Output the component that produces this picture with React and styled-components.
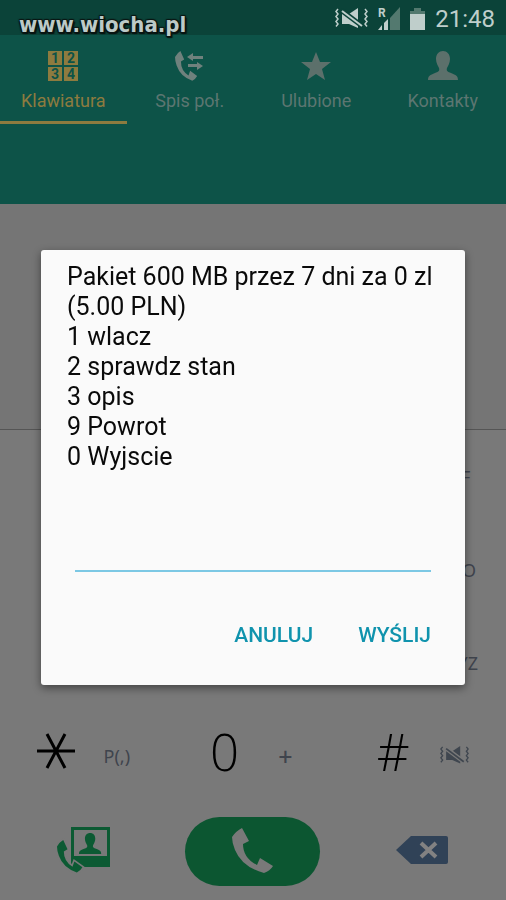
import React, { useState } from "react";
import styled, { createGlobalStyle } from "styled-components";

const GlobalStyle = createGlobalStyle`
  * {
    box-sizing: border-box;
  }
  body {
    margin: 0;
    background-color: #797979;
    font-family: Roboto, "Liberation Sans", sans-serif;
  }
  button {
    padding: 0;
    border: 0;
    background: none;
    font-family: inherit;
    cursor: pointer;
  }
  p {
    margin: 0;
  }
`;

const Screen = styled.div`
  min-height: 100vh;
  display: flex;
  flex-direction: column;
  background-color: #797979;
`;

const StatusBar = styled.div`
  height: 35px;
  padding: 2px 11px 0 0;
  display: flex;
  align-items: center;
  justify-content: flex-end;
  gap: 10px;
  background-color: #0b4339;
`;

const Clock = styled.span`
  font-size: 24px;
  line-height: 32px;
  color: #bfcecb;
`;

const Watermark = styled.span`
  position: absolute;
  top: 10px;
  left: 19px;
  font-family: "DejaVu Sans Condensed", "DejaVu Sans", sans-serif;
  font-size: 22px;
  line-height: 30px;
  font-weight: 700;
  color: #bccac7;
  text-shadow: -1px -1px 1px #0a1513, 1px -1px 1px #0a1513, -1px 1px 1px #0a1513,
    1px 1px 1px #0a1513, 2px 2px 1px #0a1513, 0 2px 1px #0a1513;
`;

const Header = styled.header`
  height: 169px;
  background-color: #0d5348;
`;

const Tabs = styled.nav`
  display: grid;
  grid-template-columns: repeat(4, 1fr);
`;

const Tab = styled.button`
  height: 89px;
  padding-top: 16px;
  display: flex;
  flex-direction: column;
  align-items: center;
  gap: 8px;
  font-size: 18px;
  line-height: 24px;
  color: ${({ $active }) => ($active ? "#8d7b3f" : "#5c7671")};
  border-bottom: 3px solid ${({ $active }) => ($active ? "#8d7b3f" : "transparent")};
`;

const Display = styled.div`
  flex: 1 0 226px;
  background-color: #757575;
  border-bottom: 1px solid #555;
`;

const Keypad = styled.div`
  display: grid;
  grid-template-columns: repeat(3, 1fr);
`;

const Key = styled.button`
  height: 93px;
  padding-left: 9px;
  display: flex;
  align-items: center;
  justify-content: center;
`;

const Digit = styled.span`
  width: 56px;
  padding-bottom: 9px;
  display: flex;
  justify-content: center;
  font-family: "Open Sans", "Noto Sans", sans-serif;
  font-size: 51px;
  line-height: 60px;
  font-weight: 360;
  color: #000;
`;

const Letters = styled.span`
  width: 66px;
  display: flex;
  justify-content: center;
  font-family: "Noto Sans", sans-serif;
  font-size: ${({ $large }) => ($large ? 25 : 18)}px;
  font-weight: ${({ $large }) => ($large ? 500 : 400)};
  line-height: 24px;
  color: #3f444d;
`;

const Actions = styled.div`
  height: 98px;
  display: grid;
  grid-template-columns: repeat(3, 1fr);
  align-items: center;
  justify-items: center;
`;

const CallButton = styled.button`
  width: 135px;
  height: 69px;
  display: flex;
  align-items: center;
  justify-content: center;
  border-radius: 35px;
  background-color: #0c5631;
`;

const Overlay = styled.div`
  position: fixed;
  inset: 35px 0 0;
  padding: 0 41px;
  display: flex;
  align-items: center;
`;

const Dialog = styled.form`
  width: 100%;
  padding: 12px 26px 25px;
  border-radius: 3px;
  background-color: #fafafa;
  box-shadow: 0 3px 8px rgba(0, 0, 0, 0.45);
`;

const Message = styled.p`
  font-size: 25px;
  line-height: 30px;
  color: #0a0a0a;
  white-space: pre-line;
`;

const AnswerLabel = styled.label`
  display: block;
  padding: 60px 8px 0;
`;

const Answer = styled.input`
  display: block;
  width: 100%;
  height: 40px;
  padding: 0;
  border: 0;
  border-bottom: 2px solid #7cc8e4;
  outline: none;
  background: none;
  font-family: inherit;
  font-size: 25px;
`;

const DialogButtons = styled.div`
  margin-top: 38px;
  padding-right: 8px;
  display: flex;
  justify-content: flex-end;
  gap: 45px;
`;

const DialogButton = styled.button`
  height: 50px;
  font-size: 21px;
  line-height: 30px;
  font-weight: 500;
  color: #1093ad;
`;

const HANDSET =
  "M0 9Q4 3 10 0L17 13L11 16Q11 30 25 37L28 30L41 38Q38 43 32 45Q10 39 3 22Q0 15 0 9Z";
const PERSON =
  "M15 0C19 0 22 3 22 8C22 12 20 15 19 17C18 20 20 21 23 22C28 24 30 25 30 29H0C0 25 2 24 7 22C10 21 12 20 11 17C10 15 8 12 8 8C8 3 11 0 15 0Z";

const MuteIcon = ({ width, color, background }) => (
  <svg width={width} viewBox="0 0 33 21" fill="none">
    <path d="M3 1L1 3.500L3 6L1 8.500L3 11L1 13.500L3 16L1 18.500" stroke={color} strokeWidth="1.500" />
    <path d="M30 1L32 3.500L30 6L32 8.500L30 11L32 13.500L30 16L32 18.500" stroke={color} strokeWidth="1.500" />
    <path d="M14 6L23 0V13Z" fill={color} />
    <path d="M6 2L27 18" stroke={background} strokeWidth="5" />
    <path d="M7 3L27 18" stroke={color} strokeWidth="2" />
    <path d="M7 6V16H14L23 20V18L7 6Z" fill={color} />
  </svg>
);

const SignalIcon = () => (
  <svg width="22" height="23" viewBox="0 0 22 23" overflow="visible">
    <path d="M12 11L22 0V23H12Z" fill="#53796f" />
    <path d="M0 23L4 18V23ZM6 16L10 12V23H6Z" fill="#bfcecb" />
    <text x="0" y="10" fontSize="12" fontWeight="700" fill="#bfcecb">R</text>
  </svg>
);

const BatteryIcon = () => (
  <svg width="15" height="22" viewBox="0 0 15 22">
    <path d="M4 0H11V3H15V6H0V3H4Z" fill="#53796f" />
    <path d="M0 6H15V22H0Z" fill="#bfcecb" />
  </svg>
);

const KeypadIcon = () => (
  <svg width="30" height="30" viewBox="0 0 30 30">
    <path d="M0 0H14V14H0ZM16 0H30V14H16ZM0 16H14V30H0ZM16 16H30V30H16Z" fill="#8d7b3f" />
    <g fontSize="14" fontWeight="700" fill="#0d5348" textAnchor="middle">
      <text x="7" y="12">1</text>
      <text x="23" y="12">2</text>
      <text x="7" y="28">3</text>
      <text x="23" y="28">4</text>
    </g>
  </svg>
);

const LogIcon = () => (
  <svg width="29" height="30" viewBox="0 0 29 30" fill="#6f817d">
    <path d={HANDSET} transform="scale(0.54 0.66)" />
    <path d="M12 6L18 2V5H28V8H18V10ZM28 15L22 11V13H13V16H22V19Z" />
  </svg>
);

const StarIcon = () => (
  <svg width="30" height="30" viewBox="0 0 30 30" fill="#5c706b">
    <path d="M15 1L19 11H30L21 18L24 29L15 23L6 29L9 18L0 11H11Z" />
  </svg>
);

const PersonIcon = () => (
  <svg width="30" height="30" viewBox="0 0 30 30" fill="#5c706b">
    <path d={PERSON} />
  </svg>
);

const StarKeyIcon = () => (
  <svg width="38" height="36" viewBox="0 0 38 36" stroke="#000" strokeWidth="3">
    <path d="M0 18H38M10 1L28 35M28 1L10 35" />
  </svg>
);

const VideoCallIcon = () => (
  <svg width="54" height="46" viewBox="0 0 54 46" fill="#0c5a33">
    <path d="M14 0H53V40H14ZM17 3V29H50V3Z" fillRule="evenodd" />
    <path d={PERSON} transform="translate(22 6) scale(0.74 0.72)" />
    <path d={HANDSET} transform="translate(0 13) scale(0.62 0.72)" stroke="#797979" strokeWidth="5" />
    <path d={HANDSET} transform="translate(0 13) scale(0.62 0.72)" />
  </svg>
);

const CallIcon = () => (
  <svg width="42" height="46" viewBox="0 0 42 46" fill="#797979">
    <path d={HANDSET} />
  </svg>
);

const BackspaceIcon = () => (
  <svg width="52" height="28" viewBox="0 0 52 28">
    <path d="M0 14L15 0H50Q52 0 52 2V26Q52 28 50 28H15Z" fill="#304257" />
    <path d="M25 7L40 21M40 7L25 21" stroke="#828282" strokeWidth="4" />
  </svg>
);

const tabs = [
  { label: "Klawiatura", icon: <KeypadIcon />, active: true },
  { label: "Spis poł.", icon: <LogIcon /> },
  { label: "Ulubione", icon: <StarIcon /> },
  { label: "Kontakty", icon: <PersonIcon /> },
];

const keys = [
  { name: "1" },
  { name: "2" },
  { name: "3", letters: "DEF" },
  { name: "4" },
  { name: "5" },
  { name: "6", letters: "MNO" },
  { name: "7" },
  { name: "8" },
  { name: "9", letters: "WXYZ" },
  { name: "*", digit: <StarKeyIcon />, letters: "P(,)" },
  { name: "0", digit: "0", letters: "+", large: true },
  {
    name: "#",
    digit: "#",
    letters: <MuteIcon width="29" color="#3f464f" background="#797979" />,
  },
];

const message = `Pakiet 600 MB przez 7 dni za 0 zl
(5.00 PLN)
1 wlacz
2 sprawdz stan
3 opis
9 Powrot
0 Wyjscie`;

export default function App() {
  const [answer, setAnswer] = useState("");

  return (
    <Screen>
      <GlobalStyle />
      <StatusBar>
        <MuteIcon width="33" color="#bfcecb" background="#0b4339" />
        <SignalIcon />
        <BatteryIcon />
        <Clock>21:48</Clock>
      </StatusBar>
      <Header>
        <Tabs>
          {tabs.map(({ label, icon, active }) => (
            <Tab key={label} type="button" $active={active}>
              {icon}
              {label}
            </Tab>
          ))}
        </Tabs>
      </Header>
      <Display />
      <Keypad>
        {keys.map(({ name, digit, letters, large }) => (
          <Key key={name} type="button" aria-label={name}>
            <Digit>{digit}</Digit>
            <Letters $large={large}>{letters}</Letters>
          </Key>
        ))}
      </Keypad>
      <Actions>
        <button type="button" aria-label="Wideo">
          <VideoCallIcon />
        </button>
        <CallButton type="button" aria-label="Zadzwoń">
          <CallIcon />
        </CallButton>
        <button type="button" aria-label="Usuń">
          <BackspaceIcon />
        </button>
      </Actions>
      <Watermark>www.wiocha.pl</Watermark>
      <Overlay>
        <Dialog role="dialog" onSubmit={(e) => e.preventDefault()}>
          <Message id="ussd-message">{message}</Message>
          <AnswerLabel>
            <Answer
              aria-labelledby="ussd-message"
              value={answer}
              onChange={(e) => setAnswer(e.target.value)}
            />
          </AnswerLabel>
          <DialogButtons>
            <DialogButton type="button">ANULUJ</DialogButton>
            <DialogButton type="submit">WYŚLIJ</DialogButton>
          </DialogButtons>
        </Dialog>
      </Overlay>
    </Screen>
  );
}
